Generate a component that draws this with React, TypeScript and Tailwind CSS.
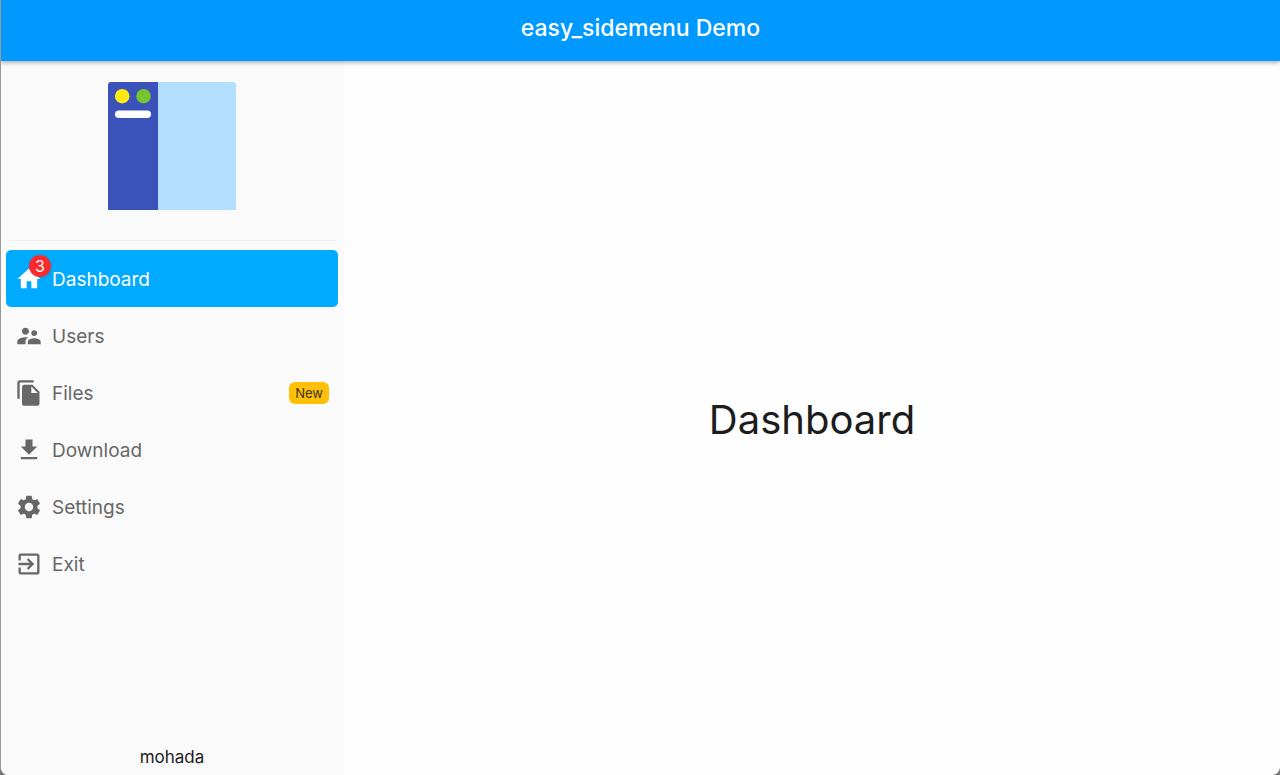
import { useState } from "react";
import type { IconType } from "react-icons";
import {
  MdExitToApp,
  MdFileCopy,
  MdFileDownload,
  MdHome,
  MdSettings,
  MdSupervisorAccount,
} from "react-icons/md";

type Item = { label: string; icon: IconType; count?: number; tag?: string };

const items: Item[] = [
  { label: "Dashboard", icon: MdHome, count: 3 },
  { label: "Users", icon: MdSupervisorAccount },
  { label: "Files", icon: MdFileCopy, tag: "New" },
  { label: "Download", icon: MdFileDownload },
  { label: "Settings", icon: MdSettings },
  { label: "Exit", icon: MdExitToApp },
];

function Logo() {
  return (
    <svg viewBox="0 0 128 128" className="size-32" aria-hidden="true">
      <path d="M50 0H125a3 3 0 0 1 3 3V128H50Z" fill="#b2dffe" />
      <path d="M3 0H50V128H0V3a3 3 0 0 1 3-3Z" fill="#3a52ba" />
      <circle cx="14.200" cy="14.200" r="7.300" fill="#ffe90f" />
      <circle cx="35.600" cy="14.200" r="7.300" fill="#76c52e" />
      <rect x="7" y="28.500" width="36" height="7.500" rx="3.750" fill="#fff" />
    </svg>
  );
}

function MenuItem({ item, active, onSelect }: { item: Item; active: boolean; onSelect: () => void }) {
  const Icon = item.icon;
  return (
    <li>
      <button
        type="button"
        onClick={onSelect}
        aria-current={active ? "page" : undefined}
        className={`flex h-[57px] w-full items-center gap-[9px] rounded-[5px] px-[9px] text-left text-[19px] ${
          active ? "bg-[#00aaff] text-white" : "text-[#676767]"
        }`}
      >
        <span className="relative">
          <Icon className="size-7" />
          {item.count !== undefined && (
            <span className="absolute -top-2.5 -right-2 flex size-[22px] items-center justify-center rounded-full bg-[#f9292c] text-base text-white shadow">
              {item.count}
            </span>
          )}
        </span>
        <span className="flex-1 pt-[3px]">{item.label}</span>
        {item.tag && (
          <span className="flex h-[22px] items-center rounded-md bg-[#ffc007] px-1.5 pt-0.5 text-[13px] text-[#3d3523]">
            {item.tag}
          </span>
        )}
      </button>
    </li>
  );
}

export default function App() {
  const [selected, setSelected] = useState("Dashboard");
  return (
    <div className="h-screen bg-[#777777] font-['Inter',sans-serif]">
      <div className="flex h-full flex-col overflow-hidden rounded-b-lg border-l border-[#999999] bg-[#fefefe]">
        <header className="z-10 flex h-[61px] shrink-0 items-center justify-center bg-[#0099ff] pb-1 shadow-[0_1px_5px_rgba(0,0,0,0.4)]">
          <h1 className="text-[23px] font-medium text-white">easy_sidemenu Demo</h1>
        </header>
        <div className="flex min-h-0 flex-1">
          <aside className="flex w-[343px] shrink-0 flex-col bg-[#fafafa] pt-[21px] pr-1.5 pb-1.5 pl-[5px]">
            <div className="flex justify-center">
              <Logo />
            </div>
            <hr className="mx-0.5 mt-[30px] mb-[9px] border-[#efefef]" />
            <nav className="flex-1">
              <ul>
                {items.map((item) => (
                  <MenuItem
                    key={item.label}
                    item={item}
                    active={selected === item.label}
                    onSelect={() => setSelected(item.label)}
                  />
                ))}
              </ul>
            </nav>
            <p className="text-center text-[17px] leading-6 text-[#1a1a1a]">mohada</p>
          </aside>
          <main className="flex flex-1 items-center justify-center pt-[3px]">
            <h2 className="text-[40px] text-[#1c1c1c]">{selected}</h2>
          </main>
        </div>
      </div>
    </div>
  );
}
